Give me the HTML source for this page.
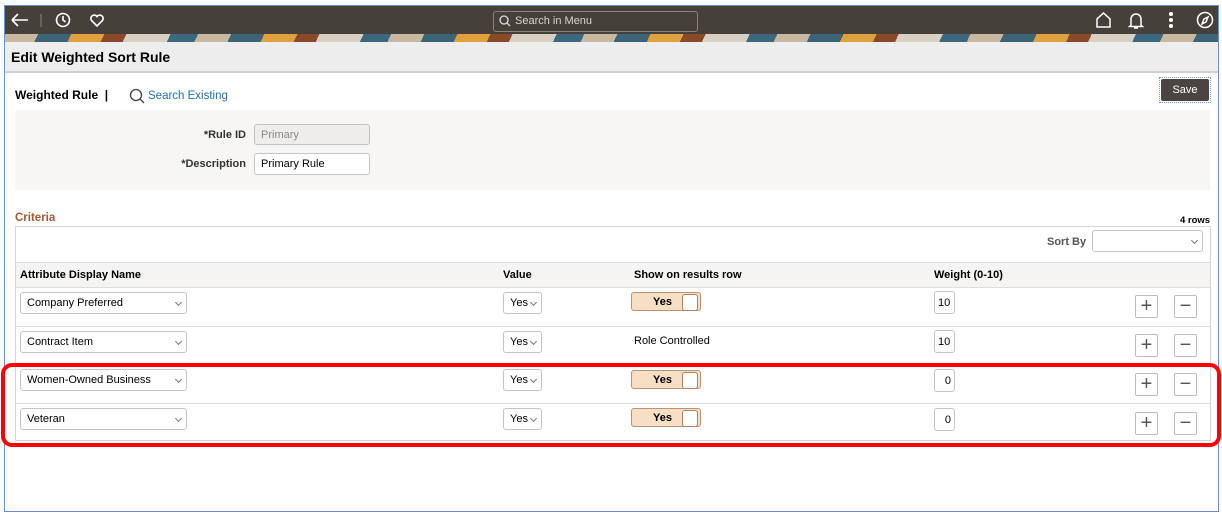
<!DOCTYPE html>
<html><head><style>
*{box-sizing:border-box;margin:0;padding:0}
body{width:1222px;height:516px;background:#fff;font-family:"Liberation Sans",sans-serif;position:relative;overflow:hidden;color:#000}
.a{position:absolute}
.frame{left:4px;top:5px;width:1215px;height:507px;border:1px solid #6b8fd0}
.hdr{left:5px;top:6px;width:1213px;height:28px;background:#46403b}
.ban{left:5px;top:34px;width:1213px;height:8px;background:repeating-linear-gradient(115deg,#c8b8a0 0 30px,#3c6478 30px 60px,#e0a040 60px 90px,#8a4a2a 90px 110px,#d8d0c0 110px 150px,#3a6880 150px 175px)}
.ttl{left:5px;top:42px;width:1213px;height:31px;background:#eeeded;border-bottom:2px solid #cfcfcf;font-weight:bold;font-size:14px;padding:7px 0 0 6px}
.srch{left:493px;top:11px;width:205px;height:21px;border:1px solid #8a837d;border-radius:3px;color:#d8d4d0;font-size:11px;padding:3px 0 0 21px}
.inp{border:1px solid #c4c4c4;border-radius:3px;background:#fff;font-size:11px;padding:0 6px;display:flex;align-items:center}
.sel:after{content:"";position:absolute;right:5px;top:7px;width:4px;height:4px;border-right:1px solid #777;border-bottom:1px solid #777;transform:rotate(45deg)}
.lbl{font-size:11px;font-weight:bold;color:#333}
.tog{width:70px;height:19px;border:1px solid #c09070;border-radius:3px;background:#f6dfc4;font-size:11px;font-weight:bold;padding:3px 0 0 21px}
.tog:after{content:"";position:absolute;right:2px;top:1px;width:14px;height:15px;background:#fff;border:1px solid #b08060;border-radius:3px}
.btn{width:23px;height:23px;border:1px solid #bbb;border-radius:2px;background:#fff;color:#555;font-size:20px;line-height:20px;text-align:center}
.rl{left:16px;width:1194px;height:1px;background:#ddd}
</style></head><body>
<div class="a frame"></div>
<div class="a hdr"></div>
<svg class="a" style="left:8px;top:10px" width="100" height="20" viewBox="0 0 100 20" fill="none" stroke="#fff" stroke-width="1.6"><path d="M4 10h16M4 10l6-6M4 10l6 6"/><path d="M33 4v13" stroke="#8a837d" stroke-width="1"/><circle cx="55" cy="10" r="6.5"/><path d="M55 6v4l2.5 2"/><path d="M89 16l-5.5-5.5a3.2 3.2 0 0 1 5.5-4 3.2 3.2 0 0 1 5.5 4z"/></svg>
<div class="a srch">Search in Menu</div>
<svg class="a" style="left:499px;top:15px" width="12" height="12" fill="none" stroke="#ddd" stroke-width="1.3"><circle cx="5" cy="5" r="4"/><path d="M8 8l3 3"/></svg>
<svg class="a" style="left:1092px;top:10px" width="125" height="20" fill="none" stroke="#fff" stroke-width="1.5"><path d="M5 17V9l6.5-6 6.5 6v8z"/><path d="M39 15V9a5 5 0 0 1 10 0v6l1.5 1.5h-13z M42 18h4"/><circle cx="79" cy="4" r="1.3" fill="#fff"/><circle cx="79" cy="10" r="1.3" fill="#fff"/><circle cx="79" cy="16" r="1.3" fill="#fff"/><circle cx="113" cy="10" r="7.5"/><path d="M116 7l-2 5-4 2 2-5z"/></svg>
<div class="a ban"></div>
<div class="a ttl">Edit Weighted Sort Rule</div>
<div class="a" style="left:15px;top:88px;font-size:12px;font-weight:bold">Weighted Rule&nbsp; |</div>
<svg class="a" style="left:129px;top:88px" width="16" height="16" fill="none" stroke="#444" stroke-width="1.3"><circle cx="7" cy="7" r="5.5"/><path d="M11 11l4 4"/></svg>
<div class="a" style="left:148px;top:90px;font-size:11.5px;color:#1f6fb2">Search Existing</div>
<div class="a" style="left:1159px;top:77px;width:52px;height:26px;border:1px dotted #6b9be0;padding:1px"><div style="background:#4a4540;color:#fff;font-size:11px;height:100%;border-radius:2px;text-align:center;line-height:22px">Save</div></div>
<div class="a" style="left:15px;top:110px;width:1195px;height:80px;background:#f7f6f4"></div>
<div class="a lbl" style="left:150px;top:129px;width:96px;text-align:right">*Rule ID</div>
<div class="a inp" style="left:254px;top:124px;width:116px;height:21px;background:#eeedeb;color:#888">Primary</div>
<div class="a lbl" style="left:150px;top:158px;width:96px;text-align:right">*Description</div>
<div class="a inp" style="left:254px;top:153px;width:116px;height:22px">Primary Rule</div>
<div class="a" style="left:15px;top:212px;font-size:11.5px;font-weight:bold;color:#a05a32">Criteria</div>
<div class="a" style="left:1180px;top:215px;font-size:9.5px;font-weight:bold">4 rows</div>
<div class="a" style="left:15px;top:226px;width:1196px;height:215px;border:1px solid #d4d4d4"></div>
<div class="a lbl" style="left:1047px;top:236px;color:#555">Sort By</div>
<div class="a inp sel" style="left:1092px;top:230px;width:111px;height:22px"></div>
<div class="a" style="left:16px;top:262px;width:1194px;height:26px;background:#f5f4f2;border-top:1px solid #ddd;border-bottom:1px solid #ddd"></div>
<div class="a lbl" style="left:20px;top:269px;color:#000">Attribute Display Name</div>
<div class="a lbl" style="left:503px;top:269px;color:#000">Value</div>
<div class="a lbl" style="left:634px;top:269px;color:#000">Show on results row</div>
<div class="a lbl" style="left:934px;top:269px;color:#000">Weight (0-10)</div>

<div class="a inp sel" style="left:20px;top:292px;width:167px;height:22px">Company Preferred</div>
<div class="a inp sel" style="left:503px;top:292px;width:39px;height:22px">Yes</div>
<div class="a tog" style="left:631px;top:292px">Yes</div>
<div class="a inp" style="left:934px;top:291px;width:21px;height:23px;padding:0 3px">10</div>
<div class="a btn" style="left:1135px;top:295px">+</div><div class="a btn" style="left:1174px;top:295px">−</div>
<div class="a rl" style="top:326px"></div>

<div class="a inp sel" style="left:20px;top:331px;width:167px;height:22px">Contract Item</div>
<div class="a inp sel" style="left:503px;top:331px;width:39px;height:22px">Yes</div>
<div class="a" style="left:634px;top:335px;font-size:11px">Role Controlled</div>
<div class="a inp" style="left:934px;top:330px;width:21px;height:23px;padding:0 3px">10</div>
<div class="a btn" style="left:1135px;top:334px">+</div><div class="a btn" style="left:1174px;top:334px">−</div>
<div class="a rl" style="top:365px"></div>

<div class="a inp sel" style="left:20px;top:369px;width:167px;height:22px">Women-Owned Business</div>
<div class="a inp sel" style="left:503px;top:369px;width:39px;height:22px">Yes</div>
<div class="a tog" style="left:631px;top:370px">Yes</div>
<div class="a inp" style="left:934px;top:369px;width:21px;height:23px;padding:0 3px;justify-content:flex-end">0</div>
<div class="a btn" style="left:1135px;top:373px">+</div><div class="a btn" style="left:1174px;top:373px">−</div>
<div class="a rl" style="top:403px"></div>

<div class="a inp sel" style="left:20px;top:408px;width:167px;height:22px">Veteran</div>
<div class="a inp sel" style="left:503px;top:408px;width:39px;height:22px">Yes</div>
<div class="a tog" style="left:631px;top:408px">Yes</div>
<div class="a inp" style="left:934px;top:408px;width:21px;height:23px;padding:0 3px;justify-content:flex-end">0</div>
<div class="a btn" style="left:1135px;top:412px">+</div><div class="a btn" style="left:1174px;top:412px">−</div>

<div class="a" style="left:1px;top:363px;width:1220px;height:84px;border:4px solid #f00;border-radius:11px"></div>
</body></html>
